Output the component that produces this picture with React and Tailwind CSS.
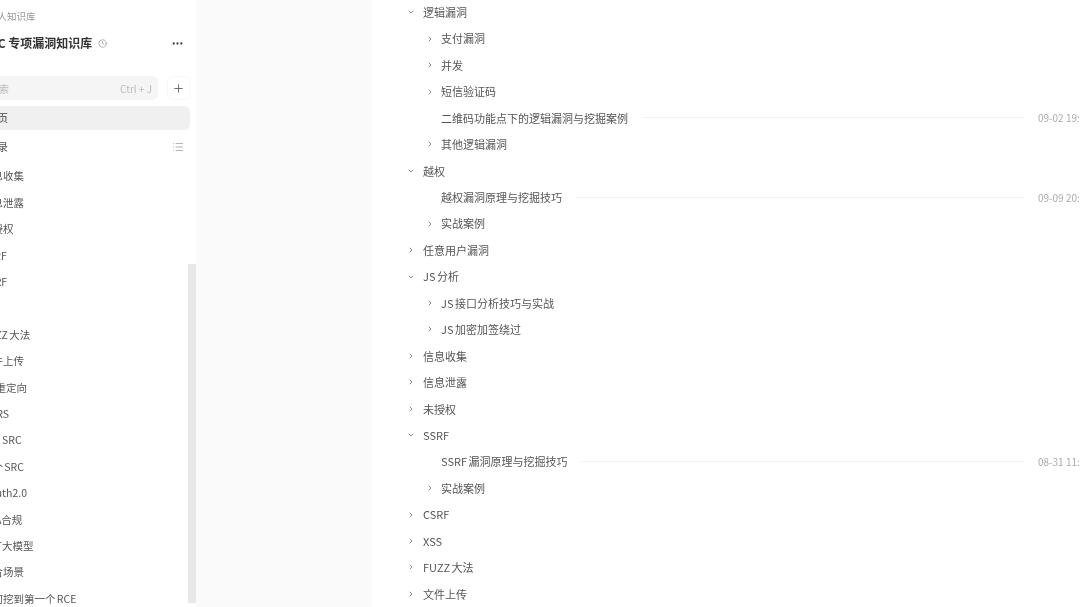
import { ChevronDown, ChevronRight, Plus, Ellipsis, List, Clock } from "lucide-react";

const sideItems = [
  "信息收集",
  "信息泄露",
  "未授权",
  "SSRF",
  "CSRF",
  "XSS",
  "FUZZ 大法",
  "文件上传",
  "url重定向",
  "CORS",
  "edu SRC",
  "某个 SRC",
  "Oauth2.0",
  "SCA合规",
  "GPT大模型",
  "综合场景",
  "如何挖到第一个 RCE",
];

const docs = [
  { text: "逻辑漏洞", open: true },
  { text: "支付漏洞", sub: true },
  { text: "并发", sub: true },
  { text: "短信验证码", sub: true },
  { text: "二维码功能点下的逻辑漏洞与挖掘案例", sub: true, leaf: true, date: "09-02 19:30" },
  { text: "其他逻辑漏洞", sub: true },
  { text: "越权", open: true },
  { text: "越权漏洞原理与挖掘技巧", sub: true, leaf: true, date: "09-09 20:15" },
  { text: "实战案例", sub: true },
  { text: "任意用户漏洞" },
  { text: "JS 分析", open: true },
  { text: "JS 接口分析技巧与实战", sub: true },
  { text: "JS 加密加签绕过", sub: true },
  { text: "信息收集" },
  { text: "信息泄露" },
  { text: "未授权" },
  { text: "SSRF", open: true },
  { text: "SSRF 漏洞原理与挖掘技巧", sub: true, leaf: true, date: "08-31 11:20" },
  { text: "实战案例", sub: true },
  { text: "CSRF" },
  { text: "XSS" },
  { text: "FUZZ 大法" },
  { text: "文件上传" },
];

const DocRow = ({ doc }) => (
  <div className={`flex h-[26.45px] shrink-0 items-center ${doc.sub ? "pl-[18px]" : ""}`}>
    <span className={`flex shrink-0 items-center text-[#666] ${doc.sub ? "w-[16px] pl-[1px]" : "w-[16px]"}`}>
      {doc.leaf ? null : doc.open ? (
        <ChevronDown size={8} strokeWidth={2.2} />
      ) : (
        <ChevronRight size={8} strokeWidth={2.2} />
      )}
    </span>
    <span className="whitespace-nowrap text-[11px] text-[#555] [word-spacing:-1px]">{doc.text}</span>
    {doc.date && (
      <>
        <span className="mx-[14px] h-px flex-1 bg-[#f2f2f2]" />
        <span className="w-[42px] shrink-0 overflow-hidden whitespace-nowrap text-[10px] text-[#aaa]">
          {doc.date}
        </span>
      </>
    )}
  </div>
);

export default function App() {
  return (
    <div className="flex h-[607px] w-[1080px] overflow-hidden bg-white font-['Noto_Sans_CJK_SC','Noto_Sans',sans-serif] blur-[0.4px]">
      {/* 左侧知识库导航 */}
      <aside className="flex w-[196px] shrink-0 overflow-hidden bg-white">
        <div className="flex w-[190px] shrink-0 flex-col overflow-hidden">
          <div className="-ml-[12px] mt-[9px] whitespace-nowrap text-[9.5px] leading-[14px] text-[#999]">
            个人知识库
          </div>
          <div className="mt-[11px] flex h-[18px] items-center justify-between pr-[6px]">
            <div className="-ml-[18px] flex items-center gap-[6px] whitespace-nowrap text-[12px] font-semibold text-[#333]">
              SRC 专项漏洞知识库
              <Clock size={9} strokeWidth={1.6} className="text-[#888]" />
            </div>
            <Ellipsis size={13} strokeWidth={2.2} className="text-[#444]" />
          </div>
          <div className="mt-[24px] flex items-center gap-[9px]">
            <div className="flex h-[24px] w-[158px] shrink-0 items-center justify-between rounded-r-md bg-[#f5f5f5] pr-[6px] text-[10px] text-[#bbb]">
              <span className="-ml-[11px]">搜索</span>
              <span>Ctrl + J</span>
            </div>
            <div className="flex h-[24px] w-[23px] shrink-0 items-center justify-center rounded-md border border-[#f7f7f7]">
              <Plus size={13} strokeWidth={1.5} className="text-[#555]" />
            </div>
          </div>
          <div className="mt-[6px] flex flex-col text-[10.5px] text-[#555] [word-spacing:-1px]">
            <div className="flex h-[24px] items-center rounded-r-md bg-[#f0f0f0] text-[#444]">
              <span className="-ml-[13px]">首页</span>
            </div>
            <div className="mt-[4px] mb-[3px] flex h-[26px] items-center justify-between pr-[6px]">
              <span className="-ml-[13px]">目录</span>
              <List size={12} strokeWidth={1.3} className="text-[#888]" />
            </div>
            {sideItems.map((item) => (
              <div key={item} className="flex h-[26.42px] shrink-0 items-center whitespace-nowrap">
                <span className="-ml-[18px]">{item}</span>
              </div>
            ))}
          </div>
        </div>
        {/* 滚动条 */}
        <div className="-ml-[2px] flex w-[8px] shrink-0 flex-col pt-[264px]">
          <div className="h-[339px] bg-[#e8e8e8]" />
        </div>
      </aside>

      <div className="w-[176px] shrink-0 bg-[#fafafa]" />

      {/* 文档目录 */}
      <main className="-mt-[1px] flex min-w-0 flex-1 flex-col pl-[35px]">
        {docs.map((doc) => (
          <DocRow key={doc.text + doc.date + doc.sub} doc={doc} />
        ))}
      </main>
    </div>
  );
}
